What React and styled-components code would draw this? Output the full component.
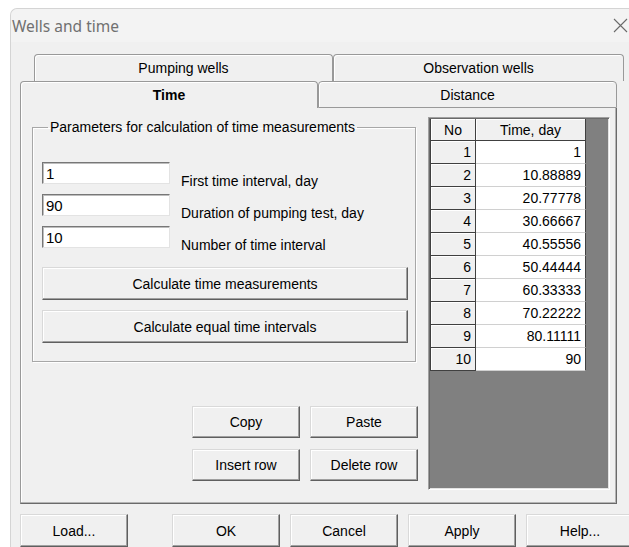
import React from 'react';
import styled, { createGlobalStyle } from 'styled-components';

const sans = `"Liberation Sans", Arial, sans-serif`;

const GlobalStyle = createGlobalStyle`
  html, body {
    margin: 0;
    background: #fff;
    overflow: hidden;
  }
  body {
    font-family: ${sans};
    font-size: 14px;
    color: #000;
  }
`;

const raised = `
  background: #f0f0f0;
  border: 1px solid;
  border-color: #d9d9d9 #5f5f5f #5f5f5f #d9d9d9;
  box-shadow: inset -1px -1px #a0a0a0, inset 1px 1px #fff;
`;

const Window = styled.div`
  margin: 8px 0 0 10px;
  width: 640px;
  height: 560px;
  background: #f0f0f0;
  border-top: 1px solid #d4d4d4;
  border-left: 1px solid #d4d4d4;
  border-top-left-radius: 7px;
  display: flex;
  flex-direction: column;
`;

const TitleBar = styled.div`
  height: 33px;
  display: flex;
  align-items: center;
  padding-left: 1px;
  background: #f3f3f3;
  border-top-left-radius: 7px;
  font-family: "Noto Sans", "Open Sans", sans-serif;
  font-size: 15.5px;
  color: #707070;
`;

const Close = styled.svg`
  margin-left: auto;
  margin-right: 23px;
  width: 15px;
  height: 15px;
`;

const Body = styled.div`
  padding: 12px 0 0 9px;
  display: flex;
  flex-direction: column;
`;

const TabRow = styled.div`
  display: flex;
  height: 27px;
  padding-left: ${(p) => p.$indent || 0}px;
`;

const Tab = styled.div`
  box-sizing: border-box;
  width: ${(p) => p.$width}px;
  height: 27px;
  display: flex;
  align-items: center;
  justify-content: center;
  background: #f0f0f0;
  border: 1px solid #999;
  border-bottom: ${(p) => (p.$underline ? '1px solid #999' : 'none')};
  border-radius: 4px 4px 0 0;
  box-shadow: inset 1px 1px #fff;
  font-size: 14px;
  font-weight: ${(p) => (p.$selected ? 'bold' : 'normal')};
`;

const Panel = styled.div`
  box-sizing: border-box;
  width: 597px;
  height: 396px;
  border: 1px solid #999;
  border-top: none;
  border-right-color: #6a6a6a;
  border-bottom-color: #6a6a6a;
  box-shadow: inset -1px -1px #b4b4b4, inset 1px 0 #fff;
  padding: 9px 6px 0 11px;
  display: grid;
  grid-template-columns: 386px 182px;
  column-gap: 10px;
  align-items: start;
`;

const LeftColumn = styled.div`
  display: flex;
  flex-direction: column;
`;

const Group = styled.fieldset`
  box-sizing: border-box;
  width: 384px;
  margin: 2px 0 0;
  padding: 27px 7px 18px 9px;
  min-inline-size: 0;
  border: 1px solid #a7a7a7;
  box-shadow: inset 1px 1px #fff, 1px 1px #fff;
`;

const Legend = styled.legend`
  margin-left: 6px;
  padding: 0 2px;
  font-size: 14px;
  line-height: 16px;
`;

const FieldRow = styled.div`
  display: flex;
  align-items: flex-start;
  gap: 11px;
  & + & {
    margin-top: 5px;
  }
`;

const Input = styled.input`
  box-sizing: border-box;
  width: 128px;
  height: 22px;
  margin: 0;
  padding: 0 3px;
  background: #fff;
  border: 1px solid;
  border-color: #777 #e3e3e3 #e3e3e3 #777;
  box-shadow: inset 1px 1px #bdbdbd;
  font-family: ${sans};
  font-size: 15px;
  color: #000;
  outline: none;
`;

const FieldLabel = styled.span`
  padding-top: 11px;
  font-size: 14px;
  line-height: 16px;
`;

const Actions = styled.div`
  margin-top: 14px;
  display: flex;
  flex-direction: column;
  gap: 10px;
`;

const Button = styled.button`
  ${raised}
  box-sizing: border-box;
  width: ${(p) => p.$width || 108}px;
  height: ${(p) => p.$height || 33}px;
  margin: 0;
  padding: 0;
  font-family: ${sans};
  font-size: 14px;
  color: #000;
`;

const EditButtons = styled.div`
  align-self: flex-end;
  margin-top: 44px;
  display: grid;
  grid-template-columns: 108px 108px;
  gap: 11px 10px;
`;

const GridBox = styled.div`
  box-sizing: border-box;
  height: 373px;
  padding: 1px;
  background: #808080;
  border: 1px solid;
  border-color: #a0a0a0 #fff #fff #a0a0a0;
  box-shadow: inset 1px 1px #6a6a6a, inset -1px -1px #e3e3e3;
`;

const Table = styled.table`
  border-collapse: separate;
  border-spacing: 0;
  font-family: ${sans};
  font-size: 14px;
  border-left: 1px solid #404040;
`;

const HeadCell = styled.th`
  box-sizing: border-box;
  width: ${(p) => p.$width}px;
  height: 22px;
  padding: 0;
  background: #f0f0f0;
  border-right: 1px solid #404040;
  border-bottom: 1px solid #404040;
  box-shadow: inset 1px 1px #fff;
  font-weight: normal;
  text-align: center;
`;

const NoCell = styled.td`
  box-sizing: border-box;
  height: 23px;
  padding: 0 4px 0 0;
  background: #f0f0f0;
  border-right: 1px solid #404040;
  border-bottom: 1px solid #404040;
  box-shadow: inset 1px 1px #fff;
  text-align: right;
`;

const ValueCell = styled.td`
  box-sizing: border-box;
  height: 23px;
  padding: 0 4px 0 0;
  background: #fff;
  border-right: 1px solid #404040;
  border-bottom: 1px solid #d0d0d0;
  text-align: right;
`;

const Footer = styled.div`
  margin-top: 10px;
  display: flex;
  gap: 10px;
`;

const Spacer = styled.div`
  width: 24px;
`;

// equal steps between first interval and test duration
const first = 1;
const duration = 90;
const count = 10;
const times = Array.from({ length: count }, (_, i) =>
  String(Number((first + (i * (duration - first)) / (count - 1)).toFixed(5)))
);

export default function App() {
  return (
    <>
      <GlobalStyle />
      <Window>
        <TitleBar>
          Wells and time
          <Close viewBox="0 0 15 15">
            <path d="M1 1L14 14M14 1L1 14" stroke="#6a6a6a" strokeWidth="1.1" fill="none" />
          </Close>
        </TitleBar>
        <Body>
          <TabRow $indent={14}>
            <Tab $width={299}>Pumping wells</Tab>
            <Tab $width={291}>Observation wells</Tab>
          </TabRow>
          <TabRow>
            <Tab $width={298} $selected>Time</Tab>
            <Tab $width={299} $underline>Distance</Tab>
          </TabRow>
          <Panel>
            <LeftColumn>
              <Group>
                <Legend>Parameters for calculation of time measurements</Legend>
                <FieldRow>
                  <Input defaultValue={first} />
                  <FieldLabel>First time interval, day</FieldLabel>
                </FieldRow>
                <FieldRow>
                  <Input defaultValue={duration} />
                  <FieldLabel>Duration of pumping test, day</FieldLabel>
                </FieldRow>
                <FieldRow>
                  <Input defaultValue={count} />
                  <FieldLabel>Number of time interval</FieldLabel>
                </FieldRow>
                <Actions>
                  <Button $width={366}>Calculate time measurements</Button>
                  <Button $width={366}>Calculate equal time intervals</Button>
                </Actions>
              </Group>
              <EditButtons>
                <Button $height={32}>Copy</Button>
                <Button $height={32}>Paste</Button>
                <Button $height={32}>Insert row</Button>
                <Button $height={32}>Delete row</Button>
              </EditButtons>
            </LeftColumn>
            <GridBox>
              <Table>
                <thead>
                  <tr>
                    <HeadCell $width={45}>No</HeadCell>
                    <HeadCell $width={110}>Time, day</HeadCell>
                  </tr>
                </thead>
                <tbody>
                  {times.map((t, i) => (
                    <tr key={i}>
                      <NoCell>{i + 1}</NoCell>
                      <ValueCell>{t}</ValueCell>
                    </tr>
                  ))}
                </tbody>
              </Table>
            </GridBox>
          </Panel>
          <Footer>
            <Button>Load...</Button>
            <Spacer />
            <Button>OK</Button>
            <Button>Cancel</Button>
            <Button>Apply</Button>
            <Button>Help...</Button>
          </Footer>
        </Body>
      </Window>
    </>
  );
}
